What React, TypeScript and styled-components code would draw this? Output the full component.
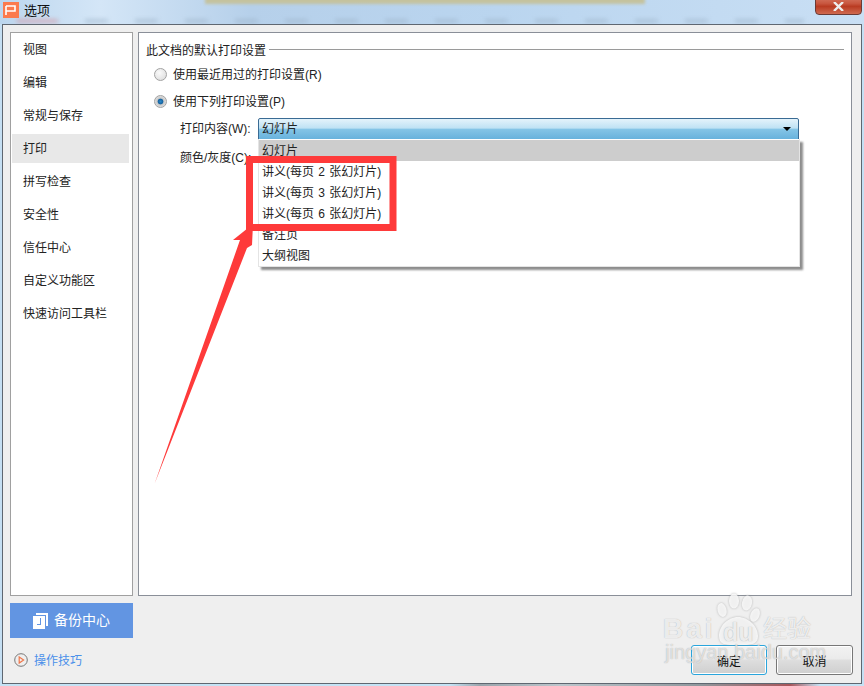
import React from "react";
import styled, { createGlobalStyle } from "styled-components";

const Global = createGlobalStyle`
  html, body { margin: 0; padding: 0; background: #c5dcf1; }
  body { font-family: "Liberation Sans", "Noto Sans CJK SC", sans-serif; font-size: 12px; color: #222; }
  * { box-sizing: border-box; }
`;

const Page = styled.div`
  position: relative;
  width: 864px;
  height: 686px;
  overflow: hidden;
  display: flex;
  flex-direction: column;
  background: #c5dff3;
`;

const TitleBar = styled.div`
  height: 24px;
  flex: none;
  display: flex;
  align-items: center;
  gap: 5px;
  padding: 0 0 4px 3px;
  position: relative;
  overflow: hidden;
  background: linear-gradient(90deg, #bcd6ee 0, #d4e6f7 100px, #b6d0ea 250px, #bad5ef 500px, #c9dff4 864px);
`;

const TanBlur = styled.div`
  position: absolute;
  left: 205px;
  top: -3px;
  width: 440px;
  height: 7px;
  background: #c4c29e;
  filter: blur(1.5px);
`;

const TabBlur = styled.div`
  position: absolute;
  left: 10px;
  right: 60px;
  bottom: 1px;
  height: 4px;
  filter: blur(2px);
  opacity: 0.55;
  background:
    linear-gradient(90deg, transparent 5px, #d98f98 8px, #d98f98 45px, transparent 50px) 0 0 / 100% 100% no-repeat,
    repeating-linear-gradient(90deg, transparent 0, transparent 25px, #9db3c8 25px, #9db3c8 45px, transparent 50px);
`;

const AppIcon = styled.div`
  width: 16px;
  height: 16px;
  background: #fb7a4d;
  display: flex;
  align-items: center;
  justify-content: center;
  position: relative;
`;

const TitleText = styled.span`
  font-size: 13px;
  color: #111;
  padding-bottom: 2px;
  position: relative;
`;

const CloseButton = styled.div`
  position: absolute;
  top: -6px;
  right: 2px;
  width: 47px;
  height: 21px;
  border: 1px solid #6b3a35;
  border-radius: 0 0 4px 4px;
  background: linear-gradient(#d9826e 0, #c8563f 45%, #b93b22 60%, #cf6a50 100%);
  display: flex;
  align-items: flex-end;
  justify-content: center;
  padding-bottom: 3px;
`;

const Dialog = styled.div`
  flex: none;
  height: 660px;
  margin: 0 2px 0 2px;
  background: #efefef;
  border: 1px solid #5f6771;
  display: flex;
  flex-direction: column;
  padding: 7px 8px 0 7px;
`;

const Main = styled.div`
  height: 564px;
  flex: none;
  display: flex;
  gap: 5px;
`;

const Side = styled.nav`
  width: 123px;
  flex: none;
  background: #fff;
  border: 1px solid #a0a0a0;
  padding: 1px;
  display: flex;
  flex-direction: column;
`;

const SideItem = styled.div<{ $active?: boolean }>`
  height: 33px;
  width: 117px;
  padding: 0 0 2px 11px;
  display: flex;
  align-items: center;
  line-height: 1;
  background: ${(p) => (p.$active ? "linear-gradient(#e8e8e8, #e8e8e8) 0 1px / 100% 29px no-repeat" : "none")};
`;

const Panel = styled.section`
  width: 714px;
  flex: none;
  background: #fff;
  border: 1px solid #8a8f98;
  padding: 8px 7px 0 7px;
  display: flex;
  flex-direction: column;
`;

const GroupTitle = styled.div`
  height: 16px;
  display: flex;
  align-items: center;
  gap: 3px;
  white-space: nowrap;
  &::after {
    content: "";
    flex: 1;
    height: 1px;
    background: #9a9a9a;
  }
`;

const RadioRow = styled.div`
  height: 27px;
  display: flex;
  align-items: center;
  gap: 6px;
  padding-left: 8px;
`;

const RadioFirst = styled(RadioRow)`
  margin-top: 4px;
`;

const RadioLabel = styled.span`
  padding-bottom: 3px;
`;

const Radio = styled.span<{ $on?: boolean }>`
  width: 13px;
  height: 13px;
  border-radius: 50%;
  border: 1px solid #a2a2a2;
  background: ${(p) =>
    p.$on
      ? "radial-gradient(circle, #2b88c8 0, #17639f 32%, #c8c8c8 42%, #f2f2f2 100%)"
      : "radial-gradient(circle at 40% 35%, #fafafa, #d9d9d9)"};
`;

const FieldRow = styled.div`
  display: flex;
  align-items: center;
  position: relative;
  padding-left: 34px;
`;

const FieldComboRow = styled(FieldRow)`
  height: 23px;
  margin-top: 2px;
`;

const FieldPlainRow = styled(FieldRow)`
  height: 20px;
  margin-top: 7px;
`;

const FieldLabel = styled.span`
  width: 78px;
  flex: none;
  white-space: nowrap;
  padding-bottom: 2px;
`;

const Combo = styled.div`
  width: 541px;
  height: 22px;
  border: 1px solid #3a6b94;
  border-radius: 2px 2px 0 0;
  background: linear-gradient(#e4f3fb 0, #bfe2f4 45%, #84c4e6 52%, #68b2dc 100%);
  display: flex;
  align-items: center;
  justify-content: space-between;
  padding: 0 7px 2px 3px;
`;

const Caret = styled.span`
  width: 0;
  height: 0;
  margin-top: 2px;
  border-left: 4px solid transparent;
  border-right: 4px solid transparent;
  border-top: 4px solid #000;
`;

const Menu = styled.div`
  position: absolute;
  left: 112px;
  top: 22px;
  width: 542px;
  height: 128px;
  padding-top: 1px;
  background: #fff;
  border: 1px solid #e4e4e4;
  border-top: none;
  box-shadow: 3px 3px 2px #8d8d8d;
  display: flex;
  flex-direction: column;
  z-index: 2;
`;

const MenuItem = styled.div<{ $active?: boolean }>`
  height: 21px;
  flex: none;
  padding: 0 0 2px 3px;
  display: flex;
  align-items: center;
  white-space: pre;
  word-spacing: 1px;
  background: ${(p) => (p.$active ? "#cdcdcd" : "transparent")};
`;

const Footer = styled.div`
  flex: 1;
  display: flex;
  justify-content: space-between;
`;

const FooterLeft = styled.div`
  width: 123px;
  padding-top: 7px;
  display: flex;
  flex-direction: column;
`;

const BackupButton = styled.div`
  height: 35px;
  background: #6295e2;
  color: #fff;
  font-size: 14px;
  display: flex;
  align-items: center;
  justify-content: center;
  gap: 6px;
`;

const BackupLabel = styled.span`
  padding-bottom: 3px;
`;

const Tips = styled.div`
  margin-top: 13px;
  padding-left: 4px;
  display: flex;
  align-items: center;
  gap: 6px;
  color: #4a90ea;
  font-size: 12px;
`;

const Buttons = styled.div`
  padding: 49px 0 0 0;
  display: flex;
  gap: 9px;
`;

const Btn = styled.div<{ $primary?: boolean }>`
  width: ${(p) => (p.$primary ? 76 : 77)}px;
  height: 30px;
  border-radius: 3px;
  border: ${(p) => (p.$primary ? "1px solid #2aa5dc" : "1px solid #777")};
  box-shadow: inset 0 0 0 1px #fff;
  background: linear-gradient(#f2f2f2 0, #ebebeb 45%, #dddddd 52%, #cfcfcf 100%);
  color: #111;
  display: flex;
  align-items: center;
  justify-content: center;
`;

const BottomStrip = styled.div`
  flex: 1;
  background: linear-gradient(90deg, #c5e3f5 0, #c5e3f5 450px, #9aa4ab 480px, #bcc6cc 560px, #8f979c 700px, #a8555a 790px, #c5e3f5 820px);
`;

const Annotations = styled.svg`
  position: absolute;
  left: 0;
  top: 0;
  pointer-events: none;
  z-index: 3;
`;

const Mark = styled.div`
  position: absolute;
  left: 692px;
  top: 590px;
  z-index: 4;
  pointer-events: none;
  color: rgba(255, 255, 255, 0.8);
  text-shadow: 0 0 1px rgba(140, 140, 140, 0.75);
`;

const MarkPaw = styled.svg`
  filter: drop-shadow(0 0 1px rgba(140, 140, 140, 0.7));
`;

const MarkBai = styled.span`
  position: absolute;
  left: -29px;
  top: 23px;
  font: bold 28px "Liberation Sans", sans-serif;
  letter-spacing: 3px;
`;

const MarkDu = styled.span`
  position: absolute;
  left: 31px;
  top: 28px;
  font: bold 25px "Liberation Sans", sans-serif;
  color: #ececec;
`;

const MarkCn = styled.span`
  position: absolute;
  left: 71px;
  top: 24px;
  font: 24px "Noto Sans CJK SC", sans-serif;
  line-height: 1.1;
  white-space: nowrap;
`;

const MarkUrl = styled.span`
  position: absolute;
  left: -27px;
  top: 51px;
  font: 20px "Liberation Sans", sans-serif;
  white-space: nowrap;
  color: rgba(255, 255, 255, 0.6);
`;

const sideItems = ["视图", "编辑", "常规与保存", "打印", "拼写检查", "安全性", "信任中心", "自定义功能区", "快速访问工具栏"];
const menuItems = ["幻灯片", "讲义(每页 2 张幻灯片)", "讲义(每页 3 张幻灯片)", "讲义(每页 6 张幻灯片)", "备注页", "大纲视图"];

export default function App() {
  return (
    <Page>
      <Global />
      <TitleBar>
        <TanBlur />
        <TabBlur />
        <AppIcon>
          <svg width="12" height="10" viewBox="0 0 12 10" fill="none" stroke="#fff" strokeWidth="1.6">
            <path d="M1 1H10V6H1M1 1V10" />
          </svg>
        </AppIcon>
        <TitleText>选项</TitleText>
        <CloseButton>
          <svg width="11" height="9" viewBox="0 0 11 9" stroke="#eee" strokeWidth="2.4">
            <path d="M1 0L10 9M10 0L1 9" />
          </svg>
        </CloseButton>
      </TitleBar>
      <Dialog>
        <Main>
          <Side>
            {sideItems.map((s) => (
              <SideItem key={s} $active={s === "打印"}>{s}</SideItem>
            ))}
          </Side>
          <Panel>
            <GroupTitle>此文档的默认打印设置</GroupTitle>
            <RadioFirst><Radio /><RadioLabel>使用最近用过的打印设置(R)</RadioLabel></RadioFirst>
            <RadioRow><Radio $on /><RadioLabel>使用下列打印设置(P)</RadioLabel></RadioRow>
            <FieldComboRow>
              <FieldLabel>打印内容(W):</FieldLabel>
              <Combo>幻灯片<Caret /></Combo>
              <Menu>
                {menuItems.map((m, i) => (
                  <MenuItem key={m} $active={i === 0}>{m}</MenuItem>
                ))}
              </Menu>
            </FieldComboRow>
            <FieldPlainRow>
              <FieldLabel>颜色/灰度(C):</FieldLabel>
            </FieldPlainRow>
          </Panel>
        </Main>
        <Footer>
          <FooterLeft>
            <BackupButton>
              <svg width="15" height="16" viewBox="0 0 15 16">
                <path d="M3 0H15V13H13V2H3Z" fill="#fff" />
                <path fillRule="evenodd" d="M0 3H12V16H0ZM7 5V11H4V12H8V5Z" fill="#fff" />
              </svg>
              <BackupLabel>备份中心</BackupLabel>
            </BackupButton>
            <Tips>
              <svg width="14" height="14" viewBox="0 0 14 14" fill="none">
                <circle cx="7" cy="7" r="6.3" stroke="#777" />
                <path d="M5.2 4L9.6 7L5.2 10Z" stroke="#f0774a" strokeWidth="1.2" />
              </svg>
              操作技巧
            </Tips>
          </FooterLeft>
          <Buttons>
            <Btn $primary>确定</Btn>
            <Btn>取消</Btn>
          </Buttons>
        </Footer>
      </Dialog>
      <BottomStrip />
      <Annotations width="864" height="686" viewBox="0 0 864 686">
        <path d="M249.5 159.5H393V227.5H249.5Z" fill="none" stroke="#fe3a3a" strokeWidth="7" />
        <path d="M154.5 484L240 240L233 240L253 224L252 245L247 248Z" fill="#fe3a3a" />
      </Annotations>
      <Mark>
        <MarkPaw width="72" height="64" viewBox="0 0 72 64" fill="rgba(255,255,255,0.8)">
          <ellipse cx="30" cy="20" rx="4.5" ry="7" transform="rotate(-14 30 20)" />
          <ellipse cx="42" cy="11" rx="5" ry="7.5" />
          <ellipse cx="55" cy="13" rx="5" ry="7.5" transform="rotate(12 55 13)" />
          <ellipse cx="63" cy="25" rx="4.5" ry="7" transform="rotate(22 63 25)" />
          <path d="M27 46C27 36 36 27 46 27S66 36 66 46C66 56 56 55 46 55S27 56 27 46Z" />
        </MarkPaw>
        <MarkBai>Bai</MarkBai>
        <MarkDu>du</MarkDu>
        <MarkCn>经验</MarkCn>
        <MarkUrl>jingyan.baidu.com</MarkUrl>
      </Mark>
    </Page>
  );
}
